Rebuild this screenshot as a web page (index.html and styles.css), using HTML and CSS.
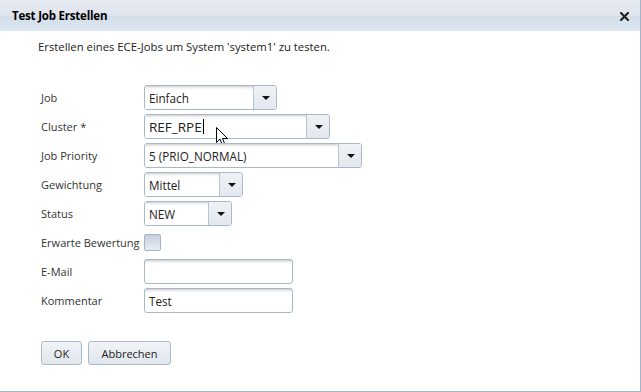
FILE: index.html
```
<!DOCTYPE html>
<html lang="de">
<head>
  <meta charset="UTF-8">
  <title>Test Job Erstellen</title>
  <link rel="stylesheet" href="styles.css">
</head>
<body>
  <div class="dialog">
    <div class="dialog-header">
      <span class="dialog-title">Test Job Erstellen</span>
      <span class="close-btn">
        <svg width="9" height="9" viewBox="0 0 9 9"><path d="M1 1 L8 8 M8 1 L1 8" stroke="#222" stroke-width="2.2" stroke-linecap="square"/></svg>
      </span>
    </div>

    <div class="dialog-body">
      <p class="intro">Erstellen eines ECE-Jobs um System 'system1' zu testen.</p>

      <form class="job-form">
        <div class="row">
          <label>Job</label>
          <div class="combo w-job">
            <span class="combo-value">Einfach</span>
            <span class="combo-arrow"></span>
          </div>
        </div>

        <div class="row">
          <label>Cluster *</label>
          <div class="combo w-cluster">
            <span class="combo-value editable">REF_RPE<span class="caret"></span></span>
            <span class="combo-arrow"></span>
          </div>
          <svg class="pointer" width="13" height="20" viewBox="0 0 13 20">
            <path d="M0.5 0.5 L0.5 15.5 L4 12 L6.5 18.5 L9 17.5 L6.5 11.5 L11.5 11.5 Z" fill="#fff" stroke="#000" stroke-width="1"/>
          </svg>
        </div>

        <div class="row">
          <label>Job Priority</label>
          <div class="combo w-priority">
            <span class="combo-value">5 (PRIO_NORMAL)</span>
            <span class="combo-arrow"></span>
          </div>
        </div>

        <div class="row">
          <label>Gewichtung</label>
          <div class="combo w-weight">
            <span class="combo-value">Mittel</span>
            <span class="combo-arrow"></span>
          </div>
        </div>

        <div class="row">
          <label>Status</label>
          <div class="combo w-status">
            <span class="combo-value">NEW</span>
            <span class="combo-arrow"></span>
          </div>
        </div>

        <div class="row">
          <label>Erwarte Bewertung</label>
          <span class="checkbox"></span>
        </div>

        <div class="row">
          <label>E-Mail</label>
          <div class="textfield"></div>
        </div>

        <div class="row">
          <label>Kommentar</label>
          <div class="textfield">Test</div>
        </div>
      </form>

      <div class="buttons">
        <button type="button" class="btn btn-ok">OK</button>
        <button type="button" class="btn btn-cancel">Abbrechen</button>
      </div>
    </div>
  </div>
</body>
</html>
```

FILE: styles.css
```
body {
  margin: 0;
  padding: 0;
  background-color: #fff;
  font-family: 'Open Sans', 'Noto Sans', sans-serif;
  font-size: 11px;
  color: #222;
}

.dialog {
  width: 640px;
  height: 391px;
  border-right: 1px solid #a3b6c9;
  border-bottom: 1px solid #a3b6c9;
  background-color: #fff;
}

.dialog-header {
  height: 31px;
  display: flex;
  align-items: center;
  justify-content: space-between;
  padding: 0 11px 0 12px;
  background: linear-gradient(to bottom, #e6eaf1 0%, #e0e5ed 50%, #d3dde8 52%, #dce7f1 100%);
}

.dialog-title {
  font-weight: bold;
  font-size: 11.5px;
  color: #000;
  letter-spacing: -0.2px;
}

.close-btn {
  display: flex;
  padding-top: 2px;
}

.dialog-body {
  padding: 8px 0 0 0;
}

.intro {
  margin: 0 0 0 38px;
  font-size: 11.3px;
  line-height: 16px;
  color: #222;
}

.job-form {
  margin-top: 30px;
  display: flex;
  flex-direction: column;
  gap: 4px;
}

.row {
  position: relative;
  display: flex;
  align-items: center;
  height: 25px;
  padding-left: 41px;
}

.row label {
  width: 103px;
  color: #333;
  white-space: nowrap;
}

.combo {
  display: flex;
  height: 25px;
  box-sizing: border-box;
  border: 1px solid #a9b8c8;
  border-radius: 3px;
  overflow: hidden;
}

.combo-value {
  flex: 1;
  display: flex;
  align-items: center;
  padding-left: 4px;
  font-size: 11.7px;
  background: linear-gradient(to bottom, #d2d2d2 0, #f4f4f4 2px, #fff 4px);
  color: #222;
}

.combo-value.editable {
  font-size: 13.5px;
}

.caret {
  display: inline-block;
  width: 1px;
  height: 15px;
  background-color: #000;
  margin-left: 1px;
}

.combo-arrow {
  width: 22px;
  border-left: 1px solid #b8c5d3;
  background: linear-gradient(to bottom, #eef2f6, #e2e8ef);
  position: relative;
}

.combo-arrow::after {
  content: "";
  position: absolute;
  left: 8px;
  top: 10px;
  border-left: 4px solid transparent;
  border-right: 4px solid transparent;
  border-top: 4px solid #111;
}

.w-job { width: 133px; }
.w-cluster { width: 186px; }
.w-priority { width: 218px; }
.w-weight { width: 99px; }
.w-status { width: 88px; }

/* mouse pointer resting over the cluster field */
.pointer {
  position: absolute;
  left: 216px;
  top: 13px;
}

.checkbox {
  width: 17px;
  height: 17px;
  box-sizing: border-box;
  border: 1px solid #a5b4c6;
  border-radius: 2px;
  background: linear-gradient(to bottom, #c5cfdc, #e9edf3);
}

.textfield {
  width: 149px;
  height: 25px;
  box-sizing: border-box;
  border: 1px solid #a9b8c8;
  border-radius: 3px;
  padding-left: 4px;
  display: flex;
  align-items: center;
  font-size: 11.7px;
  background: linear-gradient(to bottom, #cfcfcf 0, #f2f2f2 2px, #fff 4px);
  color: #222;
}

.buttons {
  display: flex;
  gap: 6px;
  margin: 28px 0 0 41px;
}

.btn {
  height: 24px;
  box-sizing: border-box;
  border: 1px solid #a9b9ca;
  border-radius: 3px;
  background: linear-gradient(to bottom, #f1f4f7, #dfe6ed);
  font-family: 'Open Sans', 'Noto Sans', sans-serif;
  font-size: 11px;
  color: #222;
  padding: 0;
  cursor: pointer;
}

.btn-ok { width: 41px; }
.btn-cancel { width: 83px; }
```
